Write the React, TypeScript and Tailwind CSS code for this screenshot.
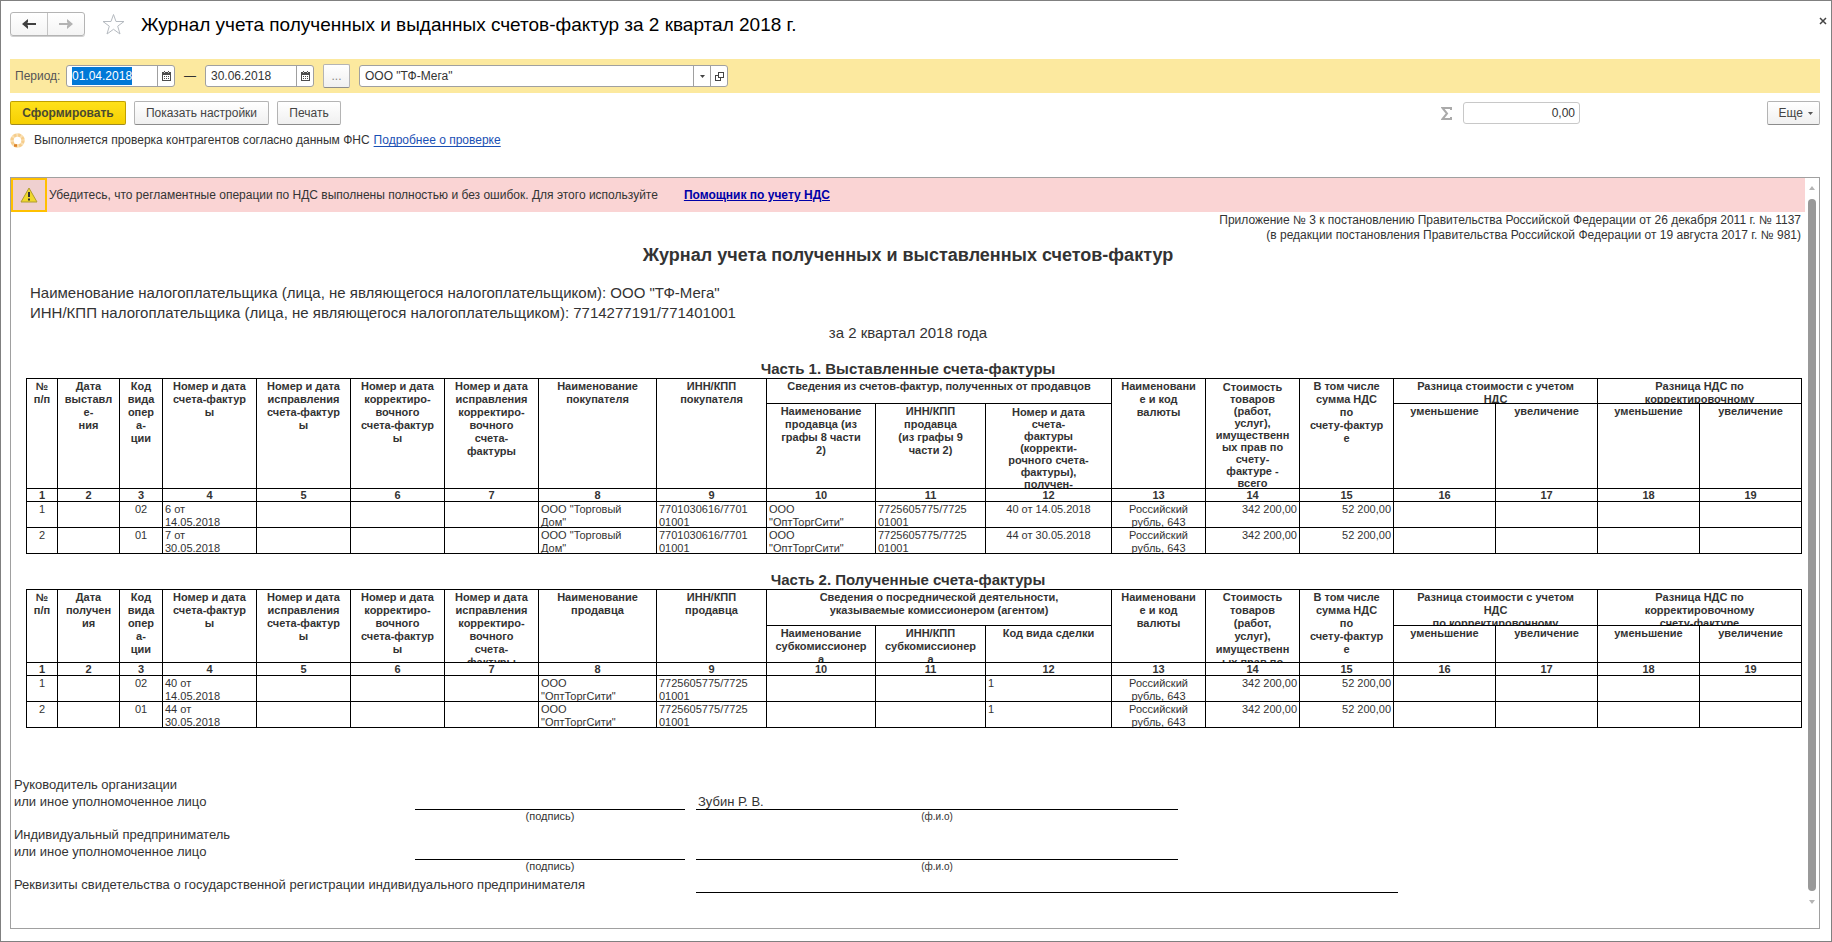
import React, { useEffect, useRef } from "react";

type Head = {
   issue: string;
   party: string;
   group: string;
   sub: string[];
   cost: string;
   vat: string;
   tops: string[];
};

const COLS = [31, 62, 43, 94, 94, 94, 94, 118, 110, 109, 110, 126, 94, 94, 94, 102, 102, 102, 102];

const ALIGN = [
   "text-center", "text-center", "text-center", "text-left", "text-left", "text-left", "text-left",
   "text-left", "text-left", "text-left", "text-left", "text-left", "text-center", "text-right",
   "text-right", "text-right", "text-right", "text-right", "text-right",
];

const issuedHead: Head = {
   issue: "Дата\nвыставл\nе-\nния",
   party: "покупателя",
   group: "Сведения из счетов-фактур, полученных от продавцов",
   sub: [
      "Наименование\nпродавца (из\nграфы 8 части\n2)",
      "ИНН/КПП\nпродавца\n(из графы 9\nчасти 2)",
      "Номер и дата\nсчета-\nфактуры\n(корректи-\nрочного счета-\nфактуры),\nполучен-",
   ],
   cost: "Стоимость\nтоваров\n(работ,\nуслуг),\nимущественн\nых прав по\nсчету-\nфактуре -\nвсего",
   vat: "В том числе\nсумма НДС\nпо\nсчету-фактур\nе",
   tops: ["Разница стоимости с учетом\nНДС", "Разница НДС по\nкорректировочному"],
};

const receivedHead: Head = {
   ...issuedHead,
   issue: "Дата\nполучен\nия",
   party: "продавца",
   group: "Сведения о посреднической деятельности,\nуказываемые комиссионером (агентом)",
   sub: ["Наименование\nсубкомиссионер\nа", "ИНН/КПП\nсубкомиссионер\nа", "Код вида сделки"],
   cost: "Стоимость\nтоваров\n(работ,\nуслуг),\nимущественн\nых прав по",
   tops: [
      "Разница стоимости с учетом\nНДС\nпо корректировочному",
      "Разница НДС по\nкорректировочному\nсчету-фактуре",
   ],
};

const tail = ["Российский\nрубль, 643", "342 200,00", "52 200,00", "", "", "", ""];

const issuedRows = [
   ["1", "", "02", "6 от\n14.05.2018", "", "", "", 'ООО "Торговый\nДом"', "7701030616/7701\n01001", 'ООО\n"ОптТоргСити"', "7725605775/7725\n01001", "40 от 14.05.2018", ...tail],
   ["2", "", "01", "7 от\n30.05.2018", "", "", "", 'ООО "Торговый\nДом"', "7701030616/7701\n01001", 'ООО\n"ОптТоргСити"', "7725605775/7725\n01001", "44 от 30.05.2018", ...tail],
];

const receivedRows = [
   ["1", "", "02", "40 от\n14.05.2018", "", "", "", 'ООО\n"ОптТоргСити"', "7725605775/7725\n01001", "", "", "1", ...tail],
   ["2", "", "01", "44 от\n30.05.2018", "", "", "", 'ООО\n"ОптТоргСити"', "7725605775/7725\n01001", "", "", "1", ...tail],
];

function Th({ text, h, cols = 1, rows = 1 }: { text: string; h: string; cols?: number; rows?: number }) {
   // the longest headings are set tighter so that their last line still shows
   const leading = text.split("\n").length > 6 ? "pt-[2px] leading-[12px]" : "pt-px leading-[13px]";
   return (
      <th colSpan={cols} rowSpan={rows} className="p-0 align-top border border-black">
         <div className={`flex justify-center overflow-hidden whitespace-pre ${leading} ${h}`}>{text}</div>
      </th>
   );
}

function Journal({ label, head, rows, heights, centered }: {
   label: string;
   head: Head;
   rows: string[][];
   heights: { top: string; sub: string; full: string };
   centered?: boolean;
}) {
   const { top, sub, full } = heights;
   return (
      <table aria-label={label} className="w-full text-[11px] border-collapse table-fixed">
         <colgroup>
            {COLS.map((w, i) => (
               <col key={i} style={{ width: w }} />
            ))}
         </colgroup>
         <thead>
            <tr>
               <Th rows={2} h={full} text={"№\nп/п"} />
               <Th rows={2} h={full} text={head.issue} />
               <Th rows={2} h={full} text={"Код\nвида\nопер\nа-\nции"} />
               <Th rows={2} h={full} text={"Номер и дата\nсчета-фактур\nы"} />
               <Th rows={2} h={full} text={"Номер и дата\nисправления\nсчета-фактур\nы"} />
               <Th rows={2} h={full} text={"Номер и дата\nкорректиро-\nвочного\nсчета-фактур\nы"} />
               <Th rows={2} h={full} text={"Номер и дата\nисправления\nкорректиро-\nвочного\nсчета-\nфактуры"} />
               <Th rows={2} h={full} text={`Наименование\n${head.party}`} />
               <Th rows={2} h={full} text={`ИНН/КПП\n${head.party}`} />
               <Th cols={3} h={top} text={head.group} />
               <Th rows={2} h={full} text={"Наименовани\nе и код\nвалюты"} />
               <Th rows={2} h={full} text={head.cost} />
               <Th rows={2} h={full} text={head.vat} />
               <Th cols={2} h={top} text={head.tops[0]} />
               <Th cols={2} h={top} text={head.tops[1]} />
            </tr>
            <tr>
               {[...head.sub, "уменьшение", "увеличение", "уменьшение", "увеличение"].map((text, i) => (
                  <Th key={i} h={sub} text={text} />
               ))}
            </tr>
            <tr>
               {COLS.map((_, i) => (
                  <th key={i} className="p-0 border border-black leading-[12px]">{i + 1}</th>
               ))}
            </tr>
         </thead>
         <tbody>
            {rows.map((row) => (
               <tr key={row[0]}>
                  {row.map((text, i) => (
                     <td key={i} className="p-0 align-top border border-black">
                        <div
                           className={`h-[25px] overflow-hidden whitespace-pre px-[2px] pt-px leading-[13px] ${
                              centered && i === 11 ? "text-center" : ALIGN[i]
                           }`}
                        >
                           {text}
                        </div>
                     </td>
                  ))}
               </tr>
            ))}
         </tbody>
      </table>
   );
}

function CalendarIcon() {
   return (
      <svg width="9" height="10" viewBox="0 0 9 10" shapeRendering="crispEdges" aria-hidden="true">
         <path d="M0 1h9v9H0z" fill="#4d4d4d" />
         <path d="M1 4h7v5H1z" fill="#fff" />
         <path d="M2 0h1v1H2zM6 0h1v1H6zM2 5h1v1H2zM4 5h1v1H4zM6 5h1v1H6zM2 7h1v1H2zM4 7h1v1H4zM6 7h1v1H6z" fill="#4d4d4d" />
         <path d="M2 1h1v1H2zM6 1h1v1H6z" fill="#ccc" />
      </svg>
   );
}

function DateField({ label, value, selected }: { label: string; value: string; selected?: boolean }) {
   const ref = useRef<HTMLInputElement>(null);
   useEffect(() => {
      if (selected) {
         ref.current?.focus();
         ref.current?.select();
      }
   }, [selected]);
   return (
      <div className="flex h-[22px] w-[109px] overflow-hidden rounded-[3px] border border-[#a0a0a0] bg-white">
         <input
            ref={ref}
            aria-label={label}
            defaultValue={value}
            className="min-w-0 flex-1 pl-[5px] text-[#333] outline-none selection:bg-[#0078d7] selection:text-white"
         />
         <button aria-label="Календарь" className="flex w-[17px] items-center justify-center border-l border-[#a0a0a0]">
            <CalendarIcon />
         </button>
      </div>
   );
}

const button =
   "h-6 rounded-[2px] border border-[#b4b4b4] border-b-[#8c8c8c] bg-gradient-to-b from-white to-[#f0f0f0] text-[#444]";

function Signature({ title, name }: { title: string; name: string }) {
   return (
      <div className="grid grid-cols-[401fr_270fr_11fr_482fr_627fr]">
         <div className="whitespace-pre text-[13px] leading-[17px]">{title}</div>
         <div className="border-b border-black" />
         <div />
         <div className="flex items-end border-b border-black pl-[2px] text-[13px] leading-[15px]">{name}</div>
         <div />
         <div />
         <div className="text-center text-[11px] leading-[13px]">(подпись)</div>
         <div />
         <div className="text-center text-[10px] leading-[13px]">(ф.и.о)</div>
      </div>
   );
}

export default function App() {
   return (
      <div className="flex min-h-screen flex-col border border-[#808080] bg-white pb-3 pl-[9px] pr-[11px] font-['Liberation_Sans',Arial,sans-serif] text-[12px] text-[#333]">
         <header className="-mr-[7px] flex h-[58px] items-start pt-[11px]">
            <div className="flex h-6 w-[75px] rounded-[3px] border border-[#b4b4b4] bg-gradient-to-b from-white to-[#f4f4f4] shadow-[0_1px_0_#d0d0d0]">
               <button aria-label="Назад" className="flex flex-1 items-center justify-center border-r border-[#c4c4c4]">
                  <svg width="14" height="10" viewBox="0 0 14 10" aria-hidden="true">
                     <path d="M3 4h11v2H3z" fill="#404040" />
                     <path d="M6 0v3L4.500 5 6 7v3L0 5z" fill="#404040" />
                  </svg>
               </button>
               <button aria-label="Вперед" className="flex flex-1 items-center justify-center">
                  <svg width="14" height="10" viewBox="0 0 14 10" aria-hidden="true">
                     <path d="M0 4h11v2H0z" fill="#b3b3b3" />
                     <path d="M8 0v3l1.500 2L8 7v3l6-5z" fill="#b3b3b3" />
                  </svg>
               </button>
            </div>
            <button aria-label="Добавить в избранное" className="ml-[17px]">
               <svg width="23" height="23" viewBox="0 0 23 23" aria-hidden="true">
                  <path
                     d="M11.500 2.500L14 9.500h8l-6.300 4.700L18 22l-6.500-4.700L5 22l2.300-7.800L1 9.500h8z"
                     fill="#fff"
                     stroke="#b5bac0"
                  />
               </svg>
            </button>
            <h1 className="ml-4 text-[19px] leading-[26px] text-black">
               Журнал учета полученных и выданных счетов-фактур за 2 квартал 2018 г.
            </h1>
            <button aria-label="Закрыть" className="ml-auto mt-[5px]">
               <svg width="8" height="8" viewBox="0 0 8 8" aria-hidden="true">
                  <path d="M1 1l6 6M7 1L1 7" stroke="#444" strokeWidth="1.500" />
               </svg>
            </button>
         </header>

         <div className="flex h-[34px] items-center bg-[#fce99f] pl-[5px]">
            <span className="w-[51px] text-[#555]">Период:</span>
            <DateField label="Начало периода" value="01.04.2018" selected />
            <span className="w-[30px] text-center">—</span>
            <DateField label="Конец периода" value="30.06.2018" />
            <button aria-label="Выбрать период" className={`${button} ml-[9px] w-[27px]`}>
               <span className="text-[#888]">...</span>
            </button>
            <div className="ml-[9px] flex h-[22px] w-[369px] overflow-hidden rounded-[3px] border border-[#a0a0a0] bg-white">
               <input aria-label="Организация" defaultValue={'ООО "ТФ-Мега"'} className="min-w-0 flex-1 pl-[5px] outline-none" />
               <button aria-label="Список" className="flex w-[17px] items-center justify-center border-l border-[#a0a0a0]">
                  <svg width="5" height="3" viewBox="0 0 5 3" aria-hidden="true">
                     <path d="M0 0h5L2.500 3z" fill="#444" />
                  </svg>
               </button>
               <button aria-label="Открыть" className="flex w-[17px] items-center justify-center border-l border-[#a0a0a0]">
                  <svg width="9" height="9" viewBox="0 0 9 9" shapeRendering="crispEdges" aria-hidden="true">
                     <path d="M3.500.5h5v5h-5zM3 3.500H.5v5h5V6" fill="none" stroke="#444" />
                  </svg>
               </button>
            </div>
         </div>

         <div className="mt-2 flex h-6 items-center">
            <button className="h-6 w-[116px] rounded-[2px] border border-[#c0a000] border-b-[#a08a20] bg-gradient-to-b from-[#ffe11a] to-[#f6d000] font-bold text-[#4a4a30]">
               Сформировать
            </button>
            <button className={`${button} ml-2 w-[135px]`}>Показать настройки</button>
            <button className={`${button} ml-2 w-16`}>Печать</button>
            <label htmlFor="total" className="ml-auto mr-[11px]">
               <svg width="11" height="13" viewBox="0 0 11 13" aria-label="Сумма">
                  <path d="M10 3V1H1.500L6 6.500 1.500 12H10v-2" fill="none" stroke="#aaa" strokeWidth="2" />
               </svg>
            </label>
            <input id="total" defaultValue="0,00" className="mr-[187px] h-[22px] w-[117px] rounded-[3px] border border-[#c8c8c8] pr-1 text-right outline-none" />
            <button className={`${button} flex w-[53px] items-center justify-end gap-[5px] pr-[6px]`}>
               Еще
               <svg width="5" height="3" viewBox="0 0 5 3" aria-hidden="true">
                  <path d="M0 0h5L2.500 3z" fill="#555" />
               </svg>
            </button>
         </div>

         <div className="mt-[7px] flex h-4 items-center">
            <svg width="15" height="15" viewBox="0 0 15 15" className="mr-[9px]" aria-hidden="true">
               <circle cx="7.500" cy="7.500" r="5.500" fill="none" stroke="#fae0b4" strokeWidth="3.500" />
               <circle cx="7.500" cy="7.500" r="5.500" fill="none" stroke="#f6cd8c" strokeWidth="3" strokeDasharray="2.500 1.820" />
               <path d="M4 12.500h3" stroke="#dc8228" strokeWidth="2.500" />
            </svg>
            <span>Выполняется проверка контрагентов согласно данным ФНС</span>
            <a href="#check" className="ml-1 text-[#1a4fb4] underline underline-offset-2">Подробнее о проверке</a>
         </div>

         <main className="mt-[29px] flex flex-1 border border-[#a0a0a0]">
            <div className="min-w-0 flex-1">
               <div className="flex h-[34px] items-center bg-[#fad4d4]">
                  <div className="flex h-full w-9 items-center justify-center border-2 border-[#ffc000] bg-[#efd0d0]">
                     <svg width="18" height="16" viewBox="0 0 18 16" aria-hidden="true">
                        <path d="M9 1l8 14H1z" fill="#f0d82c" stroke="#b09c30" strokeLinejoin="round" />
                        <path d="M9 5v5M9 11.500v2" stroke="#333" strokeWidth="2" />
                     </svg>
                  </div>
                  <span className="ml-[2px]">
                     Убедитесь, что регламентные операции по НДС выполнены полностью и без ошибок. Для этого используйте
                  </span>
                  <a href="#vat" className="ml-[26px] font-bold text-[#0000a8] underline">Помощник по учету НДС</a>
               </div>

               <div className="pr-1 pt-px text-right leading-[15px]">
                  <p>Приложение № 3 к постановлению Правительства Российской Федерации от 26 декабря 2011 г. № 1137</p>
                  <p>(в редакции постановления Правительства Российской Федерации от 19 августа 2017 г. № 981)</p>
               </div>
               <h2 className="text-center text-[18px] font-bold leading-[24px]">
                  Журнал учета полученных и выставленных счетов-фактур
               </h2>
               <div className="mt-4 pl-[19px] text-[15px] leading-[20px]">
                  <p>{'Наименование налогоплательщика (лица, не являющегося налогоплательщиком): ООО "ТФ-Мега"'}</p>
                  <p>ИНН/КПП налогоплательщика (лица, не являющегося налогоплательщиком): 7714277191/771401001</p>
               </div>
               <p className="text-center text-[15px] leading-[20px]">за 2 квартал 2018 года</p>

               <h3 className="mt-4 text-center text-[15px] font-bold leading-[19px]">Часть 1. Выставленные счета-фактуры</h3>
               <div className="pl-[15px] pr-[3px]">
                  <Journal
                     label="Выставленные счета-фактуры"
                     head={issuedHead}
                     rows={issuedRows}
                     heights={{ top: "h-[24px]", sub: "h-[84px]", full: "h-[109px]" }}
                     centered
                  />
               </div>

               <h3 className="mt-4 text-center text-[15px] font-bold leading-[19px]">Часть 2. Полученные счета-фактуры</h3>
               <div className="pl-[15px] pr-[3px]">
                  <Journal
                     label="Полученные счета-фактуры"
                     head={receivedHead}
                     rows={receivedRows}
                     heights={{ top: "h-[35px]", sub: "h-[36px]", full: "h-[72px]" }}
                  />
               </div>

               <div className="mt-12 flex flex-col gap-[3px] pl-[3px]">
                  <Signature title={"Руководитель организации\nили иное уполномоченное лицо"} name="Зубин Р. В." />
                  <Signature title={"Индивидуальный предприниматель\nили иное уполномоченное лицо"} name="" />
                  <div className="grid grid-cols-[682fr_702fr_407fr] text-[13px] leading-[17px]">
                     <div>Реквизиты свидетельства о государственной регистрации индивидуального предпринимателя</div>
                     <div className="border-b border-black" />
                  </div>
               </div>
            </div>

            <div className="flex w-[14px] flex-col items-center pb-[24px] pt-2">
               <svg width="6" height="4" viewBox="0 0 6 4" aria-hidden="true">
                  <path d="M3 0l3 4H0z" fill="#b4b4b4" />
               </svg>
               <div className="my-[9px] w-2 flex-1 rounded-full bg-[#999]" />
               <svg width="6" height="4" viewBox="0 0 6 4" aria-hidden="true">
                  <path d="M0 0h6L3 4z" fill="#b4b4b4" />
               </svg>
            </div>
         </main>
      </div>
   );
}
